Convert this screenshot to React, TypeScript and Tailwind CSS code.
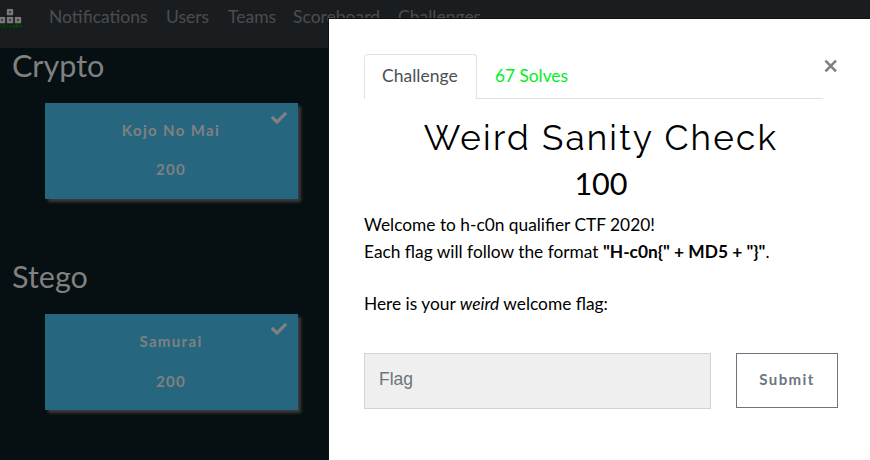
import React from "react";

const navLinks = [
  { label: "Notifications", width: "w-[117px]" },
  { label: "Users", width: "w-[62px]" },
  { label: "Teams", width: "w-[65px]" },
  { label: "Scoreboard", width: "w-[105px]" },
  { label: "Challenges", width: "w-[90px]" },
];

const categories = [
  { title: "Crypto", challenge: "Kojo No Mai", points: 200, gap: "mb-[16px]" },
  { title: "Stego", challenge: "Samurai", points: 200, gap: "mb-[17px]" },
];

function Logo() {
  return (
    <svg width="23" height="24" viewBox="0 0 23 24" className="shrink-0">
      {[[6, 0], [-2, 8], [6, 8], [14, 8]].map(([x, y]) => (
        <g key={`${x}-${y}`}>
          <rect x={x} y={y} width="8" height="8" fill="#0b0c0d" />
          <rect x={x + 0.7} y={y + 0.8} width="6.6" height="6.6" fill="#777777" />
          <rect x={x + 3} y={y + 3.3} width="2" height="1.4" fill="#2c2c2c" />
        </g>
      ))}
      <path
        d="M0 17.5h2M3 17h2M3 19h1M6 18h2M9 19h2M12 18h3M16 17h2M16 19h2M19 18h3M1 19.5h2M5 19.5h1M14 19.5h2M20 19.5h1"
        stroke="#004500"
        strokeWidth="1.4"
        shapeRendering="crispEdges"
      />
    </svg>
  );
}

function Check() {
  return (
    <svg width="16" height="16" viewBox="0 0 512 512" className="absolute right-[11px] top-[7px]">
      <path
        fill="#808080"
        d="M173.898 439.404l-166.4-166.4c-9.997-9.997-9.997-26.206 0-36.204l36.203-36.204c9.997-9.998 26.207-9.998 36.204 0L192 312.69 432.095 72.596c9.997-9.997 26.207-9.997 36.204 0l36.203 36.204c9.997 9.997 9.997 26.206 0 36.204l-294.4 294.401c-9.998 9.997-26.207 9.997-36.204-.001z"
      />
    </svg>
  );
}

export default function App() {
  return (
    <div className="relative h-[460px] w-[870px] overflow-hidden bg-[#060f11] font-[Lato,sans-serif]">
      <nav className="flex h-12 bg-[#1a1d20] text-[17.5px] leading-[26px] text-[#4b4d4f]">
        <div className="w-[49px] shrink-0 pt-[8px]">
          <Logo />
        </div>
        <div className="flex pt-[4px]">
          {navLinks.map((l) => (
            <a key={l.label} className={`${l.width} shrink-0 whitespace-nowrap`}>
              {l.label}
            </a>
          ))}
        </div>
      </nav>

      <main className="w-[329px]">
        {categories.map((c) => (
          <section key={c.title} className="h-[211px]">
            <h3 className="h-[55px] pl-[12px] text-[30.6px] leading-[35px] text-[#808080]">{c.title}</h3>
            <button className="relative ml-[45px] flex h-[96px] w-[253px] flex-col items-center bg-[#26677f] pr-px pt-[16px] text-[15px] font-bold leading-[23px] tracking-[1.35px] text-[#808080] shadow-[3px_3px_3px_#3c3c3c]">
              <Check />
              <span className={c.gap}>{c.challenge}</span>
              <span>{c.points}</span>
            </button>
          </section>
        ))}
      </main>

      <div className="absolute left-[329px] top-[19px] h-[441px] w-[541px] bg-white pl-[35px] pt-[35px] text-[17.5px] text-black shadow-[0_0_0_1px_#101214]">
        <div className="flex">
          <div className="flex h-[45px] w-[459px] border-b border-[#dee2e6]">
            <div className="h-[45px] w-[113px] rounded-t border border-b-0 border-[#dee2e6] bg-white pl-[17px] pt-[8px] leading-[26px] text-[#495057]">
              Challenge
            </div>
            <div className="pl-[18px] pt-[9px] text-[17.3px] leading-[26px] text-[#00ee22]">67 Solves</div>
          </div>
          <svg width="16" height="16" viewBox="0 0 16 16" className="mt-[4px] shrink-0">
            <path d="M2.4 2.7 13 13.3 M13 2.7 2.4 13.3" stroke="#808080" strokeWidth="2.6" />
          </svg>
        </div>

        <div className="w-[474px]">
          <h3 className="mt-[17px] whitespace-nowrap text-center font-[Raleway,Lato,sans-serif] text-[35px] leading-[44px] tracking-[2.2px]">
            Weird Sanity Check
          </h3>
          <h4 className="mt-[5px] text-center text-[30.6px] leading-[38px]">100</h4>
          <div className="mt-[9px] whitespace-nowrap text-[17.32px] leading-[26px]">
            <p>Welcome to h-c0n qualifier CTF 2020!</p>
            <p className="mt-px">
              Each flag will follow the format <strong>"H-c0n{"{"}" + MD5 + "{"}"}"</strong>.
            </p>
            <p className="mt-[26px]">
              Here is your <em>weird</em> welcome flag:
            </p>
          </div>
          <div className="mt-[36px] flex items-start justify-between">
            <input
              placeholder="Flag"
              className="h-[56px] w-[347px] border border-[#ced4da] bg-[#efefef] px-[14px] pb-[4px] font-['Liberation_Sans',sans-serif] text-[17.5px] placeholder:text-[#6c757d]"
            />
            <button className="h-[55px] w-[102px] border border-[#6c757d] pb-[2px] text-[15px] font-bold tracking-[1.4px] text-[#6c757d]">
              Submit
            </button>
          </div>
        </div>
      </div>
    </div>
  );
}
